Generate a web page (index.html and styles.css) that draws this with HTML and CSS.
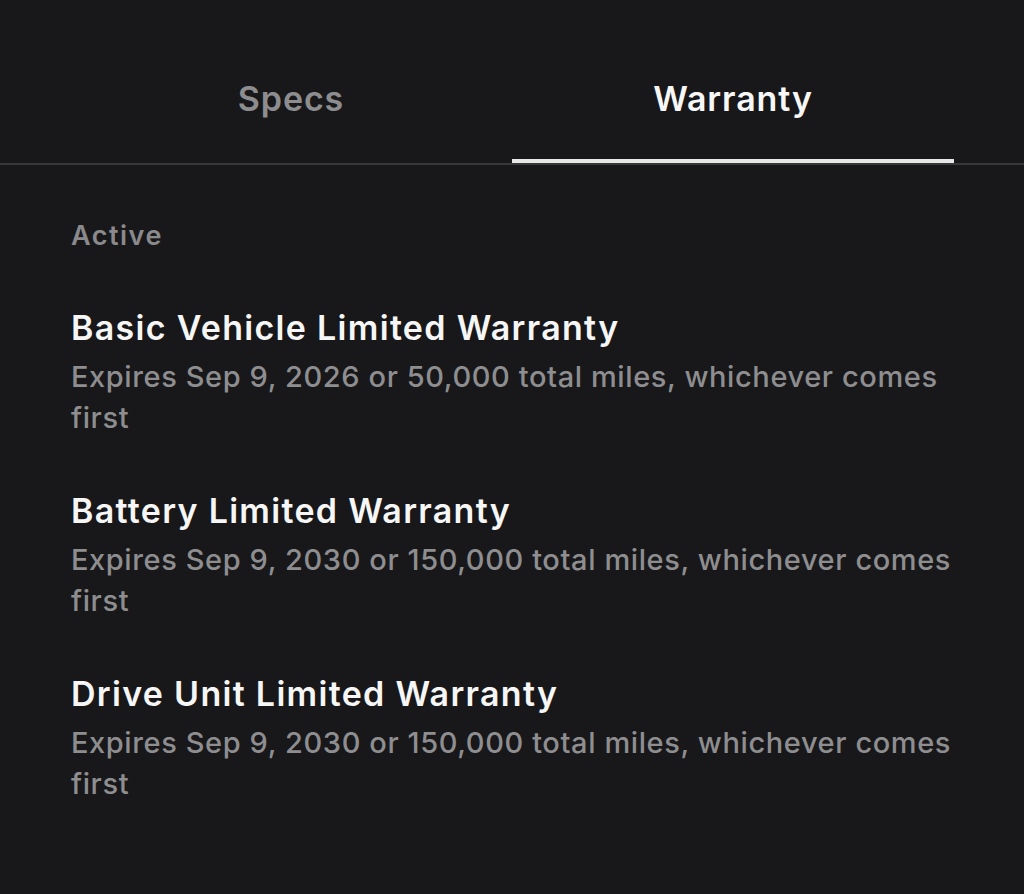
FILE: index.html
```html
<!DOCTYPE html>
<html lang="en">
<head>
<meta charset="utf-8">
<title>Warranty</title>
<link rel="stylesheet" href="styles.css">
</head>
<body>
<div class="tabs">
  <div class="tab">Specs</div>
  <div class="tab active">Warranty</div>
</div>
<main class="content">
  <div class="section-label">Active</div>
  <div class="item">
    <div class="item-title">Basic Vehicle Limited Warranty</div>
    <div class="item-desc">Expires Sep 9, 2026 or 50,000 total miles, whichever comes first</div>
  </div>
  <div class="item">
    <div class="item-title">Battery Limited Warranty</div>
    <div class="item-desc">Expires Sep 9, 2030 or 150,000 total miles, whichever comes first</div>
  </div>
  <div class="item">
    <div class="item-title">Drive Unit Limited Warranty</div>
    <div class="item-desc">Expires Sep 9, 2030 or 150,000 total miles, whichever comes first</div>
  </div>
</main>
</body>
</html>
```
FILE: styles.css
```css
html, body {
  margin: 0;
  padding: 0;
  background: #18181a;
  height: 100%;
}
body {
  font-family: Inter, "Noto Sans", sans-serif;
  color: #f4f4f4;
}
.tabs {
  display: flex;
  padding: 0 70px;
  border-bottom: 2px solid #38383a;
}
.tab {
  flex: 1;
  text-align: center;
  font-size: 34px;
  font-weight: 600;
  line-height: 40px;
  letter-spacing: 0.9px;
  padding-top: 79px;
  height: 80px;
  color: #8d8d8f;
  border-bottom: 4px solid transparent;
}
.tab.active {
  color: #f7f7f7;
  border-bottom-color: #e8e8e8;
}
.content {
  padding: 55px 60px 0 71px;
}
.section-label {
  font-size: 27px;
  font-weight: 600;
  line-height: 32px;
  letter-spacing: 1.5px;
  color: #8a8a8c;
}
.item {
  margin-top: 56px;
}
.item + .item {
  margin-top: 53px;
}
.item-title {
  font-size: 34px;
  font-weight: 600;
  line-height: 40px;
  letter-spacing: 1.3px;
  color: #f6f6f6;
}
.item-desc {
  margin-top: 8px;
  font-size: 29px;
  font-weight: 500;
  line-height: 41px;
  letter-spacing: 0.6px;
  color: #8e8e90;
}
```
